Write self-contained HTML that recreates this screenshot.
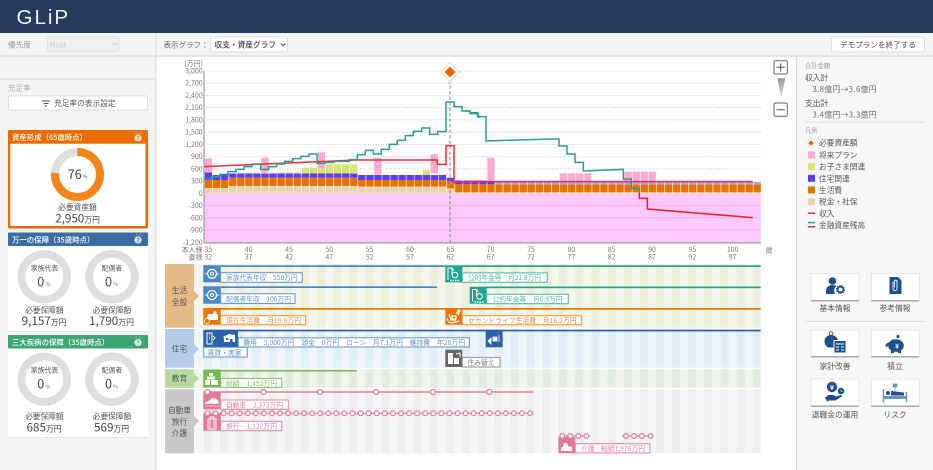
<!DOCTYPE html>
<html lang="ja"><head><meta charset="utf-8"><title>GLiP</title>
<style>
html,body{margin:0;padding:0;width:933px;height:470px;overflow:hidden;background:#fff}
svg{display:block;filter:blur(.3px)}
text{font-family:"Noto Sans CJK JP","Liberation Sans",sans-serif}
</style></head><body>
<svg width="933" height="470" viewBox="0 0 933 470" xmlns="http://www.w3.org/2000/svg">
<defs>
<pattern id="s1" x="204" y="0" width="16.14" height="10" patternUnits="userSpaceOnUse"><rect width="16.14" height="10" fill="#f6f5ec"/><rect width="8.07" height="10" fill="#eeeedd"/></pattern>
<pattern id="s2" x="204" y="0" width="16.14" height="10" patternUnits="userSpaceOnUse"><rect width="16.14" height="10" fill="#eef6fb"/><rect width="8.07" height="10" fill="#e0eef7"/></pattern>
<pattern id="s3" x="204" y="0" width="16.14" height="10" patternUnits="userSpaceOnUse"><rect width="16.14" height="10" fill="#f0f4ec"/><rect width="8.07" height="10" fill="#e2ecdc"/></pattern>
<pattern id="s4" x="204" y="0" width="16.14" height="10" patternUnits="userSpaceOnUse"><rect width="16.14" height="10" fill="#f6f6f6"/><rect width="8.07" height="10" fill="#eeeeee"/></pattern>
<pattern id="gap" x="204" y="0" width="8.07" height="10" patternUnits="userSpaceOnUse"><rect width="1" height="10" fill="#fff" fill-opacity=".65"/></pattern>
<pattern id="rings" x="203.27" y="408" width="8.07" height="10" patternUnits="userSpaceOnUse"><path d="M0 5.3H8.07" stroke="#e07a95" stroke-width="1"/><circle cx="4.03" cy="5.3" r="2.4" fill="#fff" stroke="#e07a95" stroke-width="1.2"/></pattern>
<linearGradient id="tri" x1="0" y1="0" x2="0" y2="1"><stop offset="0" stop-color="#999"/><stop offset="1" stop-color="#ddd"/></linearGradient>
</defs>

<!-- panels -->
<rect width="933" height="470" fill="#fff"/>
<rect y="33" width="933" height="22" fill="#f4f4f4"/>
<rect y="55" width="933" height="2" fill="#e3e3ea"/>
<rect y="57" width="155" height="413" fill="#f4f4f4"/>
<rect x="155" y="33" width="1.6" height="437" fill="#e2e2e2"/>
<rect y="78.5" width="155" height="1.6" fill="#e2e2e2"/>
<rect x="796" y="57" width="137" height="413" fill="#f7f7f7"/>
<rect x="796" y="57" width="1.2" height="413" fill="#dcdcdc"/>

<!-- header -->
<rect width="933" height="33" fill="#263a59"/>
<text x="16.5" y="24" font-size="20.5" fill="#f2f4f6" letter-spacing="2" style="font-family:'Liberation Sans',sans-serif">GLiP</text>

<!-- toolbar -->
<text x="8" y="47.500" font-size="7.700" fill="#999">優先度</text>
<rect x="47.500" y="37" width="71.500" height="14.500" rx="2" fill="#efefef" stroke="#e2e2e2"/>
<text x="49.500" y="47.500" font-size="7.500" fill="#ccc">Must</text>
<path d="M112.500 43l2.200 2.200 2.200-2.200" fill="none" stroke="#ccc" stroke-width="1"/>
<text x="163.500" y="47.500" font-size="7.500" fill="#666">表示グラフ：</text>
<rect x="210.500" y="37" width="77" height="15" rx="2" fill="#fff" stroke="#dedede"/>
<text x="214.500" y="47.500" font-size="7.700" fill="#444" font-weight="500">収支・資産グラフ</text>
<path d="M281 43.500l2.200 2.200 2.200-2.200" fill="none" stroke="#444" stroke-width="1"/>
<rect x="831.500" y="37" width="93" height="15" rx="2" fill="#fff" stroke="#dedede"/>
<text x="878" y="47.500" font-size="7.600" fill="#444" text-anchor="middle">デモプランを終了する</text>

<!-- left top -->
<text x="8" y="90.500" font-size="7.500" fill="#aaa">充足率</text>
<rect x="8.500" y="96" width="139" height="14" rx="1" fill="#fff" stroke="#ddd"/>
<path d="M42 101h8M43.500 103.500h5M45 106h2" stroke="#555" stroke-width=".9"/>
<text x="54" y="106" font-size="7.700" fill="#555">充足率の表示設定</text>

<!-- card 1 -->
<rect x="8" y="130" width="140" height="98.500" rx="1.500" fill="#e86c00"/>
<rect x="10.300" y="143.700" width="135.200" height="82.300" fill="#fff"/>
<text x="12" y="140" font-size="7.400" fill="#fff" font-weight="500">資産形成（65歳時点）</text>
<circle cx="138" cy="138" r="3.600" fill="#f6e3cf"/><text x="138" y="140.300" font-size="6" fill="#e86c00" text-anchor="middle" font-weight="700">?</text>
<path d="M133.500 133l1 1.400M136 131.800l.4 1.600M140 131.800l-.4 1.600M142.500 133l-1 1.400" stroke="#f6e3cf" stroke-width=".5"/>
<circle cx="77.500" cy="174.500" r="22.500" fill="none" stroke="#dedede" stroke-width="8"/>
<circle cx="77.500" cy="174.500" r="22.500" fill="none" stroke="#f58419" stroke-width="8" stroke-dasharray="107.400 141.400" transform="rotate(-90 77.500 174.500)"/>
<text x="74.700" y="179" font-size="12.600" fill="#444" text-anchor="middle">76</text><text x="85" y="178.500" font-size="5.500" fill="#666" text-anchor="middle">%</text>
<text x="77.500" y="210" font-size="7.700" fill="#555" text-anchor="middle">必要資産額</text>
<text x="77.500" y="222.700" fill="#444" text-anchor="middle" font-size="11.700">2,950<tspan font-size="7.800">万円</tspan></text>

<!-- card 2 -->
<rect x="8" y="232.500" width="140" height="98.500" rx="1.500" fill="#fff"/>
<rect x="8" y="331" width="140" height="1" fill="#e4e4e4"/>
<rect x="8" y="232.500" width="140" height="13.500" rx="1" fill="#3b6ca2"/>
<text x="12" y="242.500" font-size="7.400" fill="#fff" font-weight="500">万一の保障（35歳時点）</text>
<circle cx="138" cy="240" r="3.600" fill="#dfe8f1"/><text x="138" y="242.300" font-size="6" fill="#3b6ca2" text-anchor="middle" font-weight="700">?</text>
<path d="M133.500 235l1 1.400M136 233.800l.4 1.600M140 233.800l-.4 1.600M142.500 235l-1 1.400" stroke="#dfe8f1" stroke-width=".5"/>
<circle cx="44.300" cy="276.700" r="22.800" fill="none" stroke="#dedede" stroke-width="7.800"/>
<circle cx="112" cy="276.700" r="22.800" fill="none" stroke="#dedede" stroke-width="7.800"/>
<text x="44.500" y="270.300" font-size="6.900" fill="#555" text-anchor="middle">家族代表</text><text x="112" y="270.300" font-size="6.900" fill="#555" text-anchor="middle">配偶者</text>
<text x="40.800" y="286.300" font-size="12.600" fill="#444" text-anchor="middle">0</text><text x="48" y="286" font-size="5.500" fill="#777" text-anchor="middle">%</text>
<text x="108.500" y="286.300" font-size="12.600" fill="#444" text-anchor="middle">0</text><text x="115.700" y="286" font-size="5.500" fill="#777" text-anchor="middle">%</text>
<text x="44.300" y="313" font-size="7.700" fill="#555" text-anchor="middle">必要保障額</text><text x="112" y="313" font-size="7.700" fill="#555" text-anchor="middle">必要保障額</text>
<text x="44" y="324.800" font-size="11.700" fill="#444" text-anchor="middle">9,157<tspan font-size="7.800">万円</tspan></text>
<text x="111.500" y="324.800" font-size="11.700" fill="#444" text-anchor="middle">1,790<tspan font-size="7.800">万円</tspan></text>

<!-- card 3 -->
<rect x="8" y="335" width="140" height="102" rx="1.500" fill="#fff"/>
<rect x="8" y="437" width="140" height="1" fill="#e4e4e4"/>
<rect x="8" y="335" width="140" height="13.500" rx="1" fill="#3ca672"/>
<text x="12" y="345" font-size="7.400" fill="#fff" font-weight="500">三大疾病の保障（35歳時点）</text>
<circle cx="138" cy="342.500" r="3.600" fill="#e2f2ea"/><text x="138" y="344.800" font-size="6" fill="#3ca672" text-anchor="middle" font-weight="700">?</text>
<path d="M133.500 337.500l1 1.400M136 336.300l.4 1.600M140 336.300l-.4 1.600M142.500 337.500l-1 1.400" stroke="#e2f2ea" stroke-width=".5"/>
<circle cx="44.300" cy="379.300" r="22.800" fill="none" stroke="#dedede" stroke-width="7.800"/>
<circle cx="112" cy="379.300" r="22.800" fill="none" stroke="#dedede" stroke-width="7.800"/>
<text x="44.500" y="372.600" font-size="6.900" fill="#555" text-anchor="middle">家族代表</text><text x="112" y="372.600" font-size="6.900" fill="#555" text-anchor="middle">配偶者</text>
<text x="40.800" y="388.600" font-size="12.600" fill="#444" text-anchor="middle">0</text><text x="48" y="388.300" font-size="5.500" fill="#777" text-anchor="middle">%</text>
<text x="108.500" y="388.600" font-size="12.600" fill="#444" text-anchor="middle">0</text><text x="115.700" y="388.300" font-size="5.500" fill="#777" text-anchor="middle">%</text>
<text x="44.300" y="419" font-size="7.700" fill="#555" text-anchor="middle">必要保障額</text><text x="112" y="419" font-size="7.700" fill="#555" text-anchor="middle">必要保障額</text>
<text x="44" y="431.400" font-size="11.700" fill="#444" text-anchor="middle">685<tspan font-size="7.800">万円</tspan></text>
<text x="111.500" y="431.400" font-size="11.700" fill="#444" text-anchor="middle">569<tspan font-size="7.800">万円</tspan></text>

<!-- chart -->
<rect x="204" y="193.300" width="556.700" height="49.400" fill="#fdc8fb"/>
<g stroke="#bdbdbd" stroke-width=".8" stroke-dasharray="1 1.600">
<path d="M204 71H761M204 83.200H761M204 95.500H761M204 107.700H761M204 119.900H761M204 132.200H761M204 144.400H761M204 156.600H761M204 168.800H761M204 181.100H761"/>
</g>
<path d="M204 205.500H761M204 217.800H761M204 230H761" stroke="#e4b4e4" stroke-width=".8"/>
<g transform="translate(204 0) scale(8.07 1)">
<g fill="#e5d4ae">
<rect x="0" y="188" width="3" height="5.300"/><rect x="3" y="186" width="16" height="7.300"/><rect x="19" y="186.500" width="11" height="6.800"/><rect x="30" y="188.500" width="1" height="4.800"/><rect x="31" y="192" width="38" height="1.300"/>
<rect x="4" y="172.500" width="8" height="1.500" fill="#f0e6cc"/>
</g>
<g fill="#e67300">
<rect x="0" y="180" width="3" height="8"/><rect x="3" y="177.700" width="16" height="8.300"/><rect x="19" y="180" width="11" height="6.500"/><rect x="30" y="181.700" width="1" height="6.800"/><rect x="31" y="184.300" width="38" height="7.900"/>
</g>
<g fill="#5a3df5">
<rect x="0" y="172.300" width="1" height="7.700"/><rect x="1" y="175" width="2" height="5"/><rect x="3" y="173.500" width="16" height="4.200"/><rect x="19" y="175" width="11" height="5"/><rect x="30" y="177.700" width="1" height="4"/><rect x="31" y="180.500" width="5" height="3.800"/>
<rect x="36" y="182" width="33" height="2.300" fill="#a9a0ee"/>
</g>
<g fill="#d9e472">
<rect x="12" y="167.800" width="3" height="5.700"/><rect x="15" y="164.300" width="4" height="9.200"/><rect x="27" y="170" width="1" height="5"/><rect x="9" y="171.500" width="3" height="2" fill="#ece9b8"/>
</g>
<g fill="#ffaad3">
<rect x="0" y="158.300" width="1" height="14"/><rect x="7" y="157.700" width="1" height="15"/><rect x="14" y="152.300" width="1" height="16"/><rect x="21" y="157.700" width="1" height="17"/><rect x="28" y="154.300" width="1" height="19"/><rect x="35" y="157.700" width="1" height="24"/><rect x="44" y="173.300" width="4" height="8"/><rect x="52" y="171.700" width="4" height="9.500"/>
</g>
</g>
<rect x="204" y="150" width="556.700" height="43.300" fill="url(#gap)"/>
<path d="M204 71V243" stroke="#8a8a8a" stroke-width="1"/>
<path d="M204 242.900H761" stroke="#9a9a9a" stroke-width="1.300"/>
<path d="M450 80V243" stroke="#888" stroke-width="1" stroke-dasharray="3.500 2"/>
<!-- lines -->
<g fill="none" stroke-linejoin="miter">
<g transform="translate(160 55) scale(.33333)">
<path d="M132 335L590 315H832V328H858V272H882V382H930V379H960" stroke="#fa2a3a" stroke-width="4.500"/>
<path d="M132 372H156V365H180V358H204V350H228V343H252V335H276V327H302V343H326V335H350V327H374V319H398V311H423V304H447V297H471V325H495V322H520V319H568V314H592V299H616V286H640V297H664V283H688V268H712V256H736V242H760V229H785V219H809V238H833V230H858V141H882V155H906V168H930V176H955V186H960" stroke="#2e9a94" stroke-width="4.500"/>
</g>
<g transform="translate(470 55) scale(.33333)">
<path d="M0 380H848" stroke="#fa2a3a" stroke-width="4.500"/>
<path d="M-15 168H0V173H23V185H48V258L243 252H267V273H291V297H315V322H340V348L460 343V372H484V400H508V412" stroke="#2e9a94" stroke-width="4.500"/>
<path d="M508 412V430H532V462L848 488" stroke="#fa1a30" stroke-width="4.500"/>
</g>
</g>
<!-- diamond -->
<path d="M450 62.500L459.500 72L450 81.500L440.500 72Z" fill="#fff" stroke="#ddd" stroke-width="1"/>
<path d="M450 66.500L455.500 72L450 77.500L444.500 72Z" fill="#e8620c"/>

<!-- axis labels -->
<g font-size="7" fill="#777" text-anchor="end">
<text x="203" y="66">(万円)</text>
<text x="202.700" y="73.500">3,000</text><text x="202.700" y="85.700">2,700</text><text x="202.700" y="98">2,400</text><text x="202.700" y="110.200">2,100</text><text x="202.700" y="122.400">1,800</text><text x="202.700" y="134.700">1,500</text><text x="202.700" y="146.900">1,200</text><text x="202.700" y="159.100">900</text><text x="202.700" y="171.300">600</text><text x="202.700" y="183.600">300</text><text x="202.700" y="195.800">0</text><text x="202.700" y="208">-300</text><text x="202.700" y="220.300">-600</text><text x="202.700" y="232.500">-900</text><text x="202.700" y="245">-1,200</text>
<text x="202.500" y="252">本人様</text><text x="202.500" y="259.700">妻様</text>
</g>
<g font-size="7" fill="#777" text-anchor="middle">
<text x="208.300" y="252">35</text><text x="248.600" y="252">40</text><text x="289" y="252">45</text><text x="329.300" y="252">50</text><text x="369.700" y="252">55</text><text x="410" y="252">60</text><text x="450.400" y="252">65</text><text x="490.700" y="252">70</text><text x="531" y="252">75</text><text x="571.400" y="252">80</text><text x="611.700" y="252">85</text><text x="652" y="252">90</text><text x="692.400" y="252">95</text><text x="732.700" y="252">100</text>
<text x="208.300" y="259.700">32</text><text x="248.600" y="259.700">37</text><text x="289" y="259.700">42</text><text x="329.300" y="259.700">47</text><text x="369.700" y="259.700">52</text><text x="410" y="259.700">57</text><text x="450.400" y="259.700">62</text><text x="490.700" y="259.700">67</text><text x="531" y="259.700">72</text><text x="571.400" y="259.700">77</text><text x="611.700" y="259.700">82</text><text x="652" y="259.700">87</text><text x="692.400" y="259.700">92</text><text x="732.700" y="259.700">97</text>
<text x="769" y="252.500">歳</text>
</g>

<!-- timeline backgrounds -->
<rect x="194" y="264" width="10" height="63.700" fill="#f6f5ec"/><rect x="204" y="264" width="556.700" height="63.700" fill="url(#s1)"/>
<rect x="194" y="329" width="10" height="38.700" fill="#eef6fb"/><rect x="204" y="329" width="556.700" height="38.700" fill="url(#s2)"/>
<rect x="194" y="369.300" width="10" height="18.500" fill="#f0f4ec"/><rect x="204" y="369.300" width="556.700" height="18.500" fill="url(#s3)"/>
<rect x="194" y="389.300" width="10" height="64" fill="#f6f6f6"/><rect x="204" y="389.300" width="556.700" height="64" fill="url(#s4)"/>
<!-- timeline row labels -->
<rect x="165" y="264" width="29" height="63.700" fill="#e3bb87"/><path d="M194 291l5 5-5 5z" fill="#e3bb87"/>
<rect x="165" y="329" width="29" height="38.700" fill="#b5cbe6"/><path d="M194 344l5 5-5 5z" fill="#b5cbe6"/>
<rect x="165" y="369.300" width="29" height="18.500" fill="#b8d9a0"/><path d="M194 373.500l5 5-5 5z" fill="#b8d9a0"/>
<rect x="165" y="389.300" width="29" height="64" fill="#c8c8c8"/><path d="M194 416l5 5-5 5z" fill="#c8c8c8"/>
<g font-size="7.700" fill="#555" text-anchor="middle">
<text x="179.500" y="293">生活</text><text x="179.500" y="305">全般</text><text x="179.500" y="351.500">住宅</text><text x="179.500" y="381">教育</text><text x="179.500" y="413">自動車</text><text x="179.500" y="424.500">旅行</text><text x="179.500" y="436">介護</text>
</g>

<!-- income bars -->
<g fill="#4b86c6">
<rect x="220" y="265.300" width="225" height="1.700"/><rect x="220" y="286.300" width="217" height="1.700"/>
<rect x="203.300" y="265.300" width="17.400" height="17"/><rect x="203.300" y="286.300" width="17.400" height="17.400"/>
</g>
<g fill="none" stroke="#fff">
<circle cx="212" cy="273.800" r="4.500" stroke-width="1.300"/><circle cx="212" cy="273.800" r="1.500" stroke-width="1"/><path d="M205 273.800h2.500M216.500 273.800h2.500" stroke-width="1"/>
<circle cx="212" cy="295" r="4.500" stroke-width="1.300"/><circle cx="212" cy="295" r="1.500" stroke-width="1"/><path d="M205 295h2.500M216.500 295h2.500" stroke-width="1"/>
</g>
<rect x="220.700" y="272.700" width="81.600" height="9.600" fill="#fff" stroke="#6a9bd0" stroke-width="1.100"/>
<text x="226" y="280.200" font-size="6.800" fill="#6a98cc" textLength="71.700">家族代表年収　550万円</text>
<rect x="220.700" y="293.700" width="74.300" height="9.800" fill="#fff" stroke="#6a9bd0" stroke-width="1.100"/>
<text x="226" y="301.300" font-size="6.800" fill="#6a98cc" textLength="65">配偶者年収　100万円</text>

<!-- living -->
<g fill="#ea7500"><rect x="220" y="308" width="225" height="1.700"/><rect x="445" y="308" width="315.700" height="1.700"/><rect x="203.300" y="308" width="17.400" height="16.700"/><rect x="445.300" y="308" width="17" height="16.700"/></g>
<path d="M208 314h9l1 1v5h-10a2 2 0 0 1-1-2zM214 311l3 1-1 2h-3z" fill="#fff"/><circle cx="207" cy="321" r="2.500" fill="#ea7500" stroke="#fff" stroke-width=".7"/>
<path d="M448 322c3 1 7 1 11-1M449 314l2 6h5M452 316h4v3h-4zM456 314l3-4 1 1-2 4M447 318l1 3" stroke="#fff" stroke-width="1.300" fill="none"/>
<rect x="220.700" y="315.700" width="85" height="9" fill="#fff" stroke="#f59a45" stroke-width="1.100"/>
<text x="226" y="323" font-size="6.800" fill="#ee8a33" textLength="75">現在生活費　月19.9万円</text>
<rect x="462.300" y="315.700" width="119" height="9" fill="#fff" stroke="#f59a45" stroke-width="1.100"/>
<text x="468" y="323" font-size="6.800" fill="#ee8a33" textLength="108.500">セカンドライフ生活費　月16.2万円</text>

<!-- pension -->
<g fill="#1fa58f"><rect x="462" y="265.300" width="298.700" height="1.700"/><rect x="486" y="286.500" width="274.700" height="1.700"/><rect x="445.300" y="265.300" width="17" height="17"/><rect x="469.700" y="286.700" width="17" height="17"/></g>
<g fill="none" stroke="#fff" stroke-width="1"><path d="M448 280v-12h4l2 3M452 268v6"/><circle cx="455" cy="275" r="2.800"/><path d="M450 280.500h10" stroke-dasharray="1.500 1" stroke-width="1.500"/><path d="M472.500 301.500v-12h4l2 3M476.500 289.500v6"/><circle cx="479.500" cy="296.500" r="2.800"/><path d="M474.500 302h10" stroke-dasharray="1.500 1" stroke-width="1.500"/></g>
<rect x="462.300" y="272.900" width="85" height="9.400" fill="#fff" stroke="#55bba8" stroke-width="1.100"/>
<text x="468" y="280.200" font-size="6.800" fill="#55b5a3" textLength="73">公的年金等　月21.8万円</text>
<rect x="486.700" y="294.300" width="81.600" height="9.400" fill="#fff" stroke="#55bba8" stroke-width="1.100"/>
<text x="492.500" y="301.600" font-size="6.800" fill="#55b5a3" textLength="70">公的年金等　月6.5万円</text>

<!-- housing -->
<g fill="#2b62ab"><rect x="238" y="329.700" width="522.700" height="1.700"/><rect x="203.300" y="329.700" width="34.700" height="17.300"/><rect x="485.700" y="330" width="17" height="17.300"/></g>
<path d="M207 333h5v11h-5zM209 335h1M209 337h1M209 339h1M213 336l2 2-2 2" stroke="#fff" fill="none" stroke-width="1"/>
<path d="M223 337l6-3 6 1v7h-11v-4z" fill="#fff"/><rect x="226" y="338" width="2" height="2" fill="#2b62ab"/><rect x="230" y="339" width="2.500" height="3" fill="#2b62ab"/>
<path d="M488 341l3-3v6zM493 337h4v4h-4zM499 335v7" fill="#fff" stroke="#fff" stroke-width=".8"/>
<rect x="238.300" y="337.800" width="231" height="9.200" fill="#fff" stroke="#6a9bd0" stroke-width="1.100"/>
<text x="243.300" y="345.200" font-size="6.800" fill="#6a8fbd" textLength="221.700">費用　3,000万円　頭金　0万円　ローン　月7.1万円　維持費　年20万円</text>
<rect x="203.800" y="347.300" width="43.500" height="9.700" fill="#fff" stroke="#6a9bd0" stroke-width="1.100"/>
<text x="207.500" y="354.800" font-size="6.800" fill="#6a8fbd">賃貸・実家</text>

<rect x="445.300" y="349.700" width="17" height="17.300" fill="#666"/>
<path d="M448 353h5v11h-5zM454 358h5v6h-5z" fill="#fff"/><path d="M456 354l4-1v4" stroke="#fff" fill="none"/>
<rect x="462.300" y="357.500" width="37.700" height="9.500" fill="#fff" stroke="#999" stroke-width="1.100"/>
<text x="481" y="364.900" font-size="6.800" fill="#777" text-anchor="middle">住み替え</text>

<!-- education -->
<rect x="220" y="370" width="136.700" height="1.500" fill="#6fbb4b"/>
<rect x="203.300" y="369.500" width="17.400" height="18" fill="#6fbb4b"/>
<path d="M209 373h4v3h-4zM207 376.500h8v3h-8zM205 380h5v5h-5zM211 380h7v5h-7z" fill="#fff"/>
<rect x="220.700" y="378.500" width="61" height="9" fill="#fff" stroke="#86c765" stroke-width="1.100"/>
<text x="226" y="385.800" font-size="6.800" fill="#86bd6a" textLength="51">総額　1,452万円</text>

<!-- auto etc -->
<rect x="203.300" y="391.300" width="330" height="1.400" fill="#e07a95"/>
<rect x="203.300" y="392" width="17.400" height="17.300" fill="#e07a95"/>
<g fill="#fff" stroke="#e07a95" stroke-width="1.200"><circle cx="207.300" cy="392" r="2.500"/><circle cx="263.500" cy="392" r="2.500"/><circle cx="320" cy="392" r="2.500"/><circle cx="376.300" cy="392" r="2.500"/><circle cx="433" cy="392" r="2.500"/><circle cx="489.300" cy="392" r="2.500"/></g>
<path d="M205.500 402l3-.5 3-3h4l3 3v2h-13zM205 406h14" fill="#fff" stroke="#fff" stroke-width=".5"/>
<rect x="220.700" y="400" width="67.600" height="9.300" fill="#fff" stroke="#e88ca5" stroke-width="1.100"/>
<text x="226" y="407.400" font-size="6.800" fill="#e0809a" textLength="57">自動車　2,373万円</text>

<rect x="203.300" y="414" width="17.400" height="16.700" fill="#e07a95"/>
<rect x="203.300" y="408" width="330" height="10.600" fill="url(#rings)"/>
<path d="M208 419h8v10h-8zM210 419v-2h4v2M210 420v8M214 420v8" fill="none" stroke="#fff" stroke-width=".9"/>
<rect x="220.700" y="421.300" width="61" height="9.400" fill="#fff" stroke="#e88ca5" stroke-width="1.100"/>
<text x="226" y="428.600" font-size="6.800" fill="#e0809a" textLength="51">旅行　1,122万円</text>

<rect x="558.300" y="437" width="17" height="16.300" fill="#e07a95"/>
<path d="M560 436H590M622 436H654" stroke="#e07a95" stroke-width="1"/>
<g fill="#fff" stroke="#e07a95" stroke-width="1.200"><circle cx="562.300" cy="436" r="2.400"/><circle cx="570.300" cy="436" r="2.400"/><circle cx="578.300" cy="436" r="2.400"/><circle cx="586.300" cy="436" r="2.400"/><circle cx="626" cy="436" r="2.400"/><circle cx="634" cy="436" r="2.400"/><circle cx="642" cy="436" r="2.400"/><circle cx="650.500" cy="436" r="2.400"/></g>
<path d="M561 451h11v-4l-4-1-1-3h-3l-1 4h-2z" fill="#fff"/>
<rect x="575.300" y="443.700" width="74.700" height="9.200" fill="#fff" stroke="#e88ca5" stroke-width="1.100"/>
<text x="581" y="451" font-size="6.800" fill="#e0809a" textLength="64">介護　総額1,976万円</text>

<!-- zoom controls -->
<rect x="774" y="60.700" width="13.300" height="13.300" rx="1.500" fill="#fff" stroke="#666" stroke-width="1"/>
<path d="M776.500 67.300h8.300M780.700 63.200v8.300" stroke="#555" stroke-width="1"/>
<path d="M777.300 78.300h8L781.300 98.300z" fill="url(#tri)"/>
<rect x="774" y="103" width="13.300" height="13.300" rx="1.500" fill="#fff" stroke="#666" stroke-width="1"/>
<path d="M776.500 109.700h8.300" stroke="#555" stroke-width="1"/>

<!-- right panel -->
<text x="805" y="68" font-size="6.300" fill="#999">合計金額</text>
<text x="805" y="80.500" font-size="7.800" fill="#555">収入計</text>
<text x="812.500" y="92" font-size="7.700" fill="#666" textLength="64">3.8億円→3.6億円</text>
<text x="805" y="106" font-size="7.800" fill="#555">支出計</text>
<text x="812.500" y="117.500" font-size="7.700" fill="#666" textLength="64">3.4億円→3.3億円</text>
<rect x="805" y="121.500" width="120" height="1.200" fill="#e0e0e0"/>
<text x="805" y="132.500" font-size="6.300" fill="#999">凡例</text>
<path d="M811 138l5 5-5 5-5-5z" fill="#fff" stroke="#ddd" stroke-width=".6"/><path d="M811 140.300l2.700 2.700-2.700 2.700-2.700-2.700z" fill="#e8620c"/>
<rect x="808" y="151.500" width="7" height="7" fill="#ffaad3"/>
<rect x="808" y="163.200" width="7" height="7" fill="#d9e472"/>
<rect x="808" y="174.800" width="7" height="7" fill="#5a3df5"/>
<rect x="808" y="186.500" width="7" height="7" fill="#e67300"/>
<rect x="808" y="198.200" width="7" height="7" fill="#e5d4ae"/>
<rect x="808" y="212.500" width="7" height="1.500" fill="#fa2a3a"/>
<rect x="808" y="221.800" width="7" height="1.500" fill="#2e9a94"/><rect x="808" y="226" width="7" height="1.500" fill="#fa2a3a"/>
<g font-size="7.700" fill="#555">
<text x="819" y="145.700">必要資産額</text><text x="819" y="158">将来プラン</text><text x="819" y="169.700">お子さま関連</text><text x="819" y="181.300">住宅関連</text><text x="819" y="193">生活費</text><text x="819" y="204.700">税金・社保</text><text x="819" y="216.300">収入</text><text x="819" y="228">金融資産残高</text>
</g>

<!-- action buttons -->
<g fill="#fff" stroke="#e2e2e2" stroke-width=".8">
<rect x="811" y="273.500" width="48" height="27.500"/><rect x="871.300" y="273.500" width="48" height="27.500"/>
<rect x="811" y="330" width="48" height="27"/><rect x="871.300" y="330" width="48" height="27"/>
<rect x="811" y="379" width="48" height="27.500"/><rect x="871.300" y="379" width="48" height="27.500"/>
</g>
<g fill="#aaa"><rect x="811" y="300" width="48" height="1.500"/><rect x="871.300" y="300" width="48" height="1.500"/><rect x="811" y="356" width="48" height="1.500"/><rect x="871.300" y="356" width="48" height="1.500"/><rect x="811" y="405.500" width="48" height="1.500"/><rect x="871.300" y="405.500" width="48" height="1.500"/></g>
<g fill="#1f4f8f">
<!-- person gear -->
<circle cx="832.500" cy="281" r="3.800"/><path d="M826 294v-3c0-4 3-6 6.500-6 1.500 0 3 .4 4 1.200-2.500 1.500-3 4.500-1.500 7.800z"/>
<circle cx="840.500" cy="289.500" r="2.800" fill="none" stroke="#1f4f8f" stroke-width="1.800"/><circle cx="840.500" cy="289.500" r="4" fill="none" stroke="#1f4f8f" stroke-width="1.200" stroke-dasharray="1.300 1.200"/>
<!-- doc -->
<path d="M889.500 277h8.500l3.500 3.500v13.500h-12z"/><path d="M893 281.500v7a2 2 0 0 0 4 0v-7a1.300 1.300 0 0 0-2.600 0v6" fill="none" stroke="#fff" stroke-width=".9"/>
<!-- purse calc -->
<path d="M824.500 341c0-3.500 3-6 6.500-6s6.500 2.500 7 5h-4.500v7.500h-4c-3 0-5-3-5-6.500z"/><circle cx="831" cy="333.500" r="1.800" fill="none" stroke="#1f4f8f" stroke-width=".9"/>
<rect x="834.500" y="341" width="11" height="11.500"/><path d="M836 344h8M836 347h3M841 347h3M836 350h3M841 350h3" stroke="#fff" stroke-width="1"/>
<!-- piggy -->
<ellipse cx="896" cy="345.500" rx="7.800" ry="6.300"/><path d="M890 342l-3 1-2 3 2.500 1zM891 350h3v3h-3zM898 350h3v3h-3zM892 339l3 2-3 2z"/><circle cx="898" cy="336.500" r="1.600"/>
<text x="897" y="348.500" font-size="6.500" fill="#fff" text-anchor="middle" font-weight="700">¥</text>
<!-- coin hand -->
<circle cx="832" cy="387" r="5.200"/><circle cx="841" cy="391" r="3.300"/>
<text x="832" y="389.800" font-size="7" fill="#fff" text-anchor="middle" font-weight="700">¥</text>
<path d="M841 389.500v1.800h1.500" stroke="#fff" stroke-width=".6" fill="none"/>
<path d="M825 397.500l3.500-2.500h5l2.500 1.500 5-1.500 1.500 1-7 4.500h-6.500l-2 1z"/>
<!-- bed -->
<path d="M883.500 389v13.500M906.500 392v10.500" stroke="#6f93bf" stroke-width="1.500" fill="none"/>
<path d="M884 396h22v3h-22z" fill="#6f93bf"/><circle cx="888" cy="393" r="2" fill="#1f4f8f"/><path d="M891 391l13 1.500v3h-13z"/>
<path d="M893 384h4v3h-4zM895 387v5" fill="#6f93bf" stroke="#6f93bf" stroke-width=".7"/>
</g>
<rect x="805" y="321" width="120" height="1" fill="#dedede"/>
<g font-size="7.750" fill="#555" text-anchor="middle">
<text x="835" y="311">基本情報</text><text x="895" y="311">参考情報</text>
<text x="835" y="369">家計改善</text><text x="895" y="369">積立</text>
<text x="835" y="417.500">退職金の運用</text><text x="895" y="417.500">リスク</text>
</g>
</svg>
</body></html>
